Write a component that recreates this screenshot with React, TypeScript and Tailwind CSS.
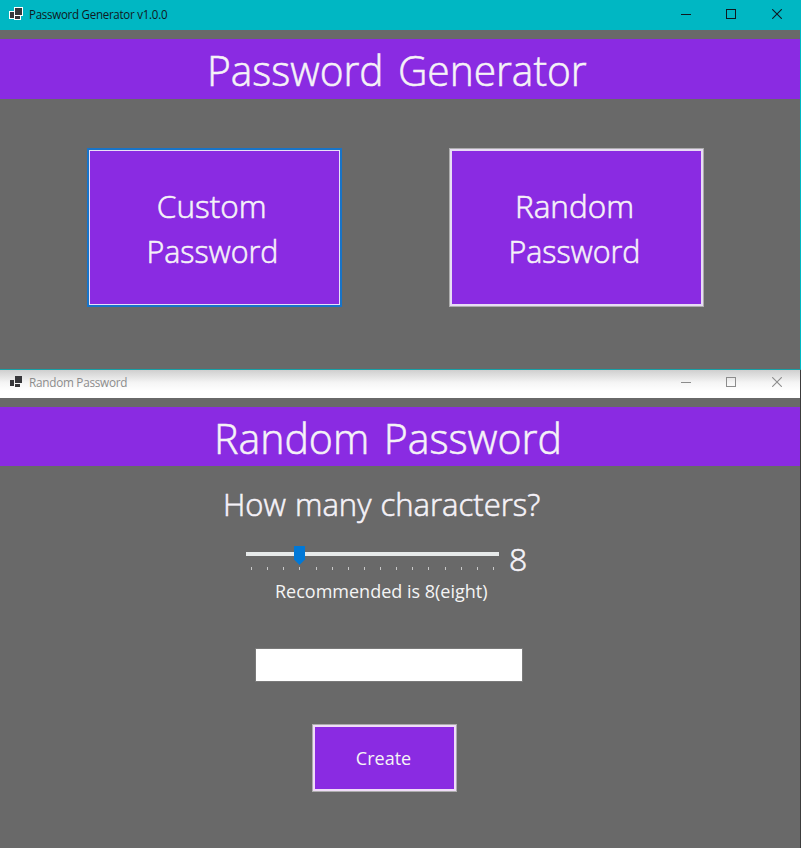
import type { ReactNode } from "react";

const FONT = "font-['Open_Sans','Noto_Sans',sans-serif]";
const DISPLAY = "font-light [-webkit-text-stroke:0.6px_#f5f0fa]";

function FormIcon({ outlined }: { outlined?: boolean }) {
  return (
    <svg width="16" height="16" viewBox="0 0 16 16" shapeRendering="crispEdges" className="shrink-0">
      {outlined && (
        <g fill="#ffffff">
          <rect x="6" y="1" width="9" height="9" />
          <rect x="1" y="5" width="6" height="8" />
          <rect x="6" y="9" width="7" height="5" />
        </g>
      )}
      <rect x="7" y="2" width="7" height="7" fill="#37373a" />
      <rect x="2" y="6" width="4" height="6" fill="#37373a" />
      <rect x="7" y="10" width="5" height="3" fill="#37373a" />
    </svg>
  );
}

function WindowControls() {
  return (
    <div className="flex">
      <span className="flex h-[28px] w-[45px] items-center justify-center">
        <svg width="10" height="10" viewBox="0 0 10 10" shapeRendering="crispEdges">
          <rect x="0" y="5" width="10" height="1" fill="currentColor" />
        </svg>
      </span>
      <span className="flex h-[28px] w-[46px] items-center justify-center">
        <svg width="10" height="10" viewBox="0 0 10 10" shapeRendering="crispEdges">
          <rect x="0.5" y="0.5" width="9" height="9" fill="none" stroke="currentColor" />
        </svg>
      </span>
      <span className="flex h-[28px] w-[45px] items-center justify-center">
        <svg width="10" height="10" viewBox="0 0 10 10">
          <path d="M0.2 0.2 L9.8 9.8 M9.8 0.2 L0.2 9.8" stroke="currentColor" strokeWidth="1.1" />
        </svg>
      </span>
    </div>
  );
}

function Banner({ children }: { children: ReactNode }) {
  return <div className="shrink-0 bg-[#8a2be2] whitespace-nowrap">{children}</div>;
}

function App() {
  const ticks = Array.from({ length: 16 }, (_, i) => i);
  return (
    <div className={`${FONT} flex h-[848px] w-[801px] flex-col overflow-hidden bg-[#696969] text-[#f5f5f5]`}>
      <section className="flex h-[369px] shrink-0 flex-col border-r border-[#00b7c3]">
        <header className="-mr-px flex h-[30px] shrink-0 justify-between bg-[#00b7c3] pr-[2px] text-[#101820]">
          <div className="flex items-start pt-[6px] pl-[8px]">
            <FormIcon outlined />
            <span className="ml-[5px] origin-left scale-x-[0.96] text-[12px] leading-[18px] tracking-[-0.27px]">
              Password Generator v1.0.0
            </span>
          </div>
          <WindowControls />
        </header>
        <div className="pt-[9px]">
          <Banner>
            <h1
              className={`${DISPLAY} ml-[207px] h-[60px] origin-left scale-x-[0.946] text-[43px] leading-[62px] [word-spacing:4px]`}
            >
              Password Generator
            </h1>
          </Banner>
        </div>
        <main className="mt-[49px] flex pl-[87px] text-[32px] leading-[45px]">
          <button className={`${DISPLAY} h-[159px] w-[255px] border-2 border-[#1874c8] bg-[#8a2be2]`}>
            <span className="flex h-full flex-col items-center justify-center border border-[#e8e0f8] pt-px pr-[5px]">
              <span className="scale-x-[0.985]">Custom</span>
              <span className="scale-x-[0.95]">Password</span>
            </span>
          </button>
          <button className={`${DISPLAY} ml-[107px] h-[159px] w-[255px] border border-[#adadad] bg-[#8a2be2]`}>
            <span className="flex h-full flex-col items-center justify-center border-2 border-[#e8dcf4] pt-px pr-[5px]">
              <span className="scale-x-[0.985]">Random</span>
              <span className="scale-x-[0.95]">Password</span>
            </span>
          </button>
        </main>
      </section>
      <div className="h-px shrink-0 bg-[#16a0a6]" />

      <section className="flex h-[478px] flex-col border-r border-[#3c3c3c]">
        <header className="flex h-[28px] shrink-0 justify-between bg-linear-to-b from-[#cfcfcf] via-[#f5f5f5] via-45% to-white to-75% pr-px text-[#8c8c8c]">
          <div className="flex items-start pt-[4px] pl-[8px]">
            <FormIcon />
            <span className="ml-[5px] origin-left scale-x-[0.98] text-[12px] leading-[18px] tracking-[-0.27px]">
              Random Password
            </span>
          </div>
          <div className="-mt-[2px]">
            <WindowControls />
          </div>
        </header>
        <div className="pt-[9px]">
          <Banner>
            <h1
              className={`${DISPLAY} ml-[214px] h-[59px] origin-left scale-x-[0.955] text-[43px] leading-[62px] [word-spacing:4px]`}
            >
              Random Password
            </h1>
          </Banner>
        </div>
        <main className="flex flex-col items-start">
          <h2
            className={`${DISPLAY} mt-[16px] ml-[223px] origin-left scale-x-[0.97] text-[32px] leading-[44px] whitespace-nowrap [word-spacing:1px]`}
          >
            How many characters?
          </h2>
          <div className="mt-[14px] ml-[246px] flex h-[39px]">
            <div className="relative w-[253px] pt-[12px]">
              <div className="h-[4px] bg-[#e7eaea]" />
              <div className="mt-[11px] ml-[5px] flex w-[243px] justify-between">
                {ticks.map((t) => (
                  <span key={t} className="h-[3px] w-px bg-[#c8c8c8]" />
                ))}
              </div>
              <svg className="absolute top-[6px] left-[48px]" width="11" height="19" viewBox="0 0 11 19">
                <path d="M0 0H11V13.5L5.5 19L0 13.5Z" fill="#0078d7" />
              </svg>
            </div>
            <span className={`${DISPLAY} ml-[10px] text-[32px] leading-[38px]`}>8</span>
          </div>
          <p className="ml-[275px] text-[18px] leading-[24px] whitespace-nowrap">Recommended is 8(eight)</p>
          <input
            className="mt-[45px] ml-[255px] h-[34px] w-[268px] border border-[#7a7a7a] bg-white outline-none"
            aria-label="Password"
          />
          <button className="mt-[42px] ml-[312px] h-[68px] w-[145px] border border-[#adadad] bg-[#8a2be2] text-[18px] leading-[24px]">
            <span className="flex h-full items-center justify-center border-2 border-[#f0dcf8] pr-[2px]">Create</span>
          </button>
        </main>
      </section>
    </div>
  );
}

export default App;
